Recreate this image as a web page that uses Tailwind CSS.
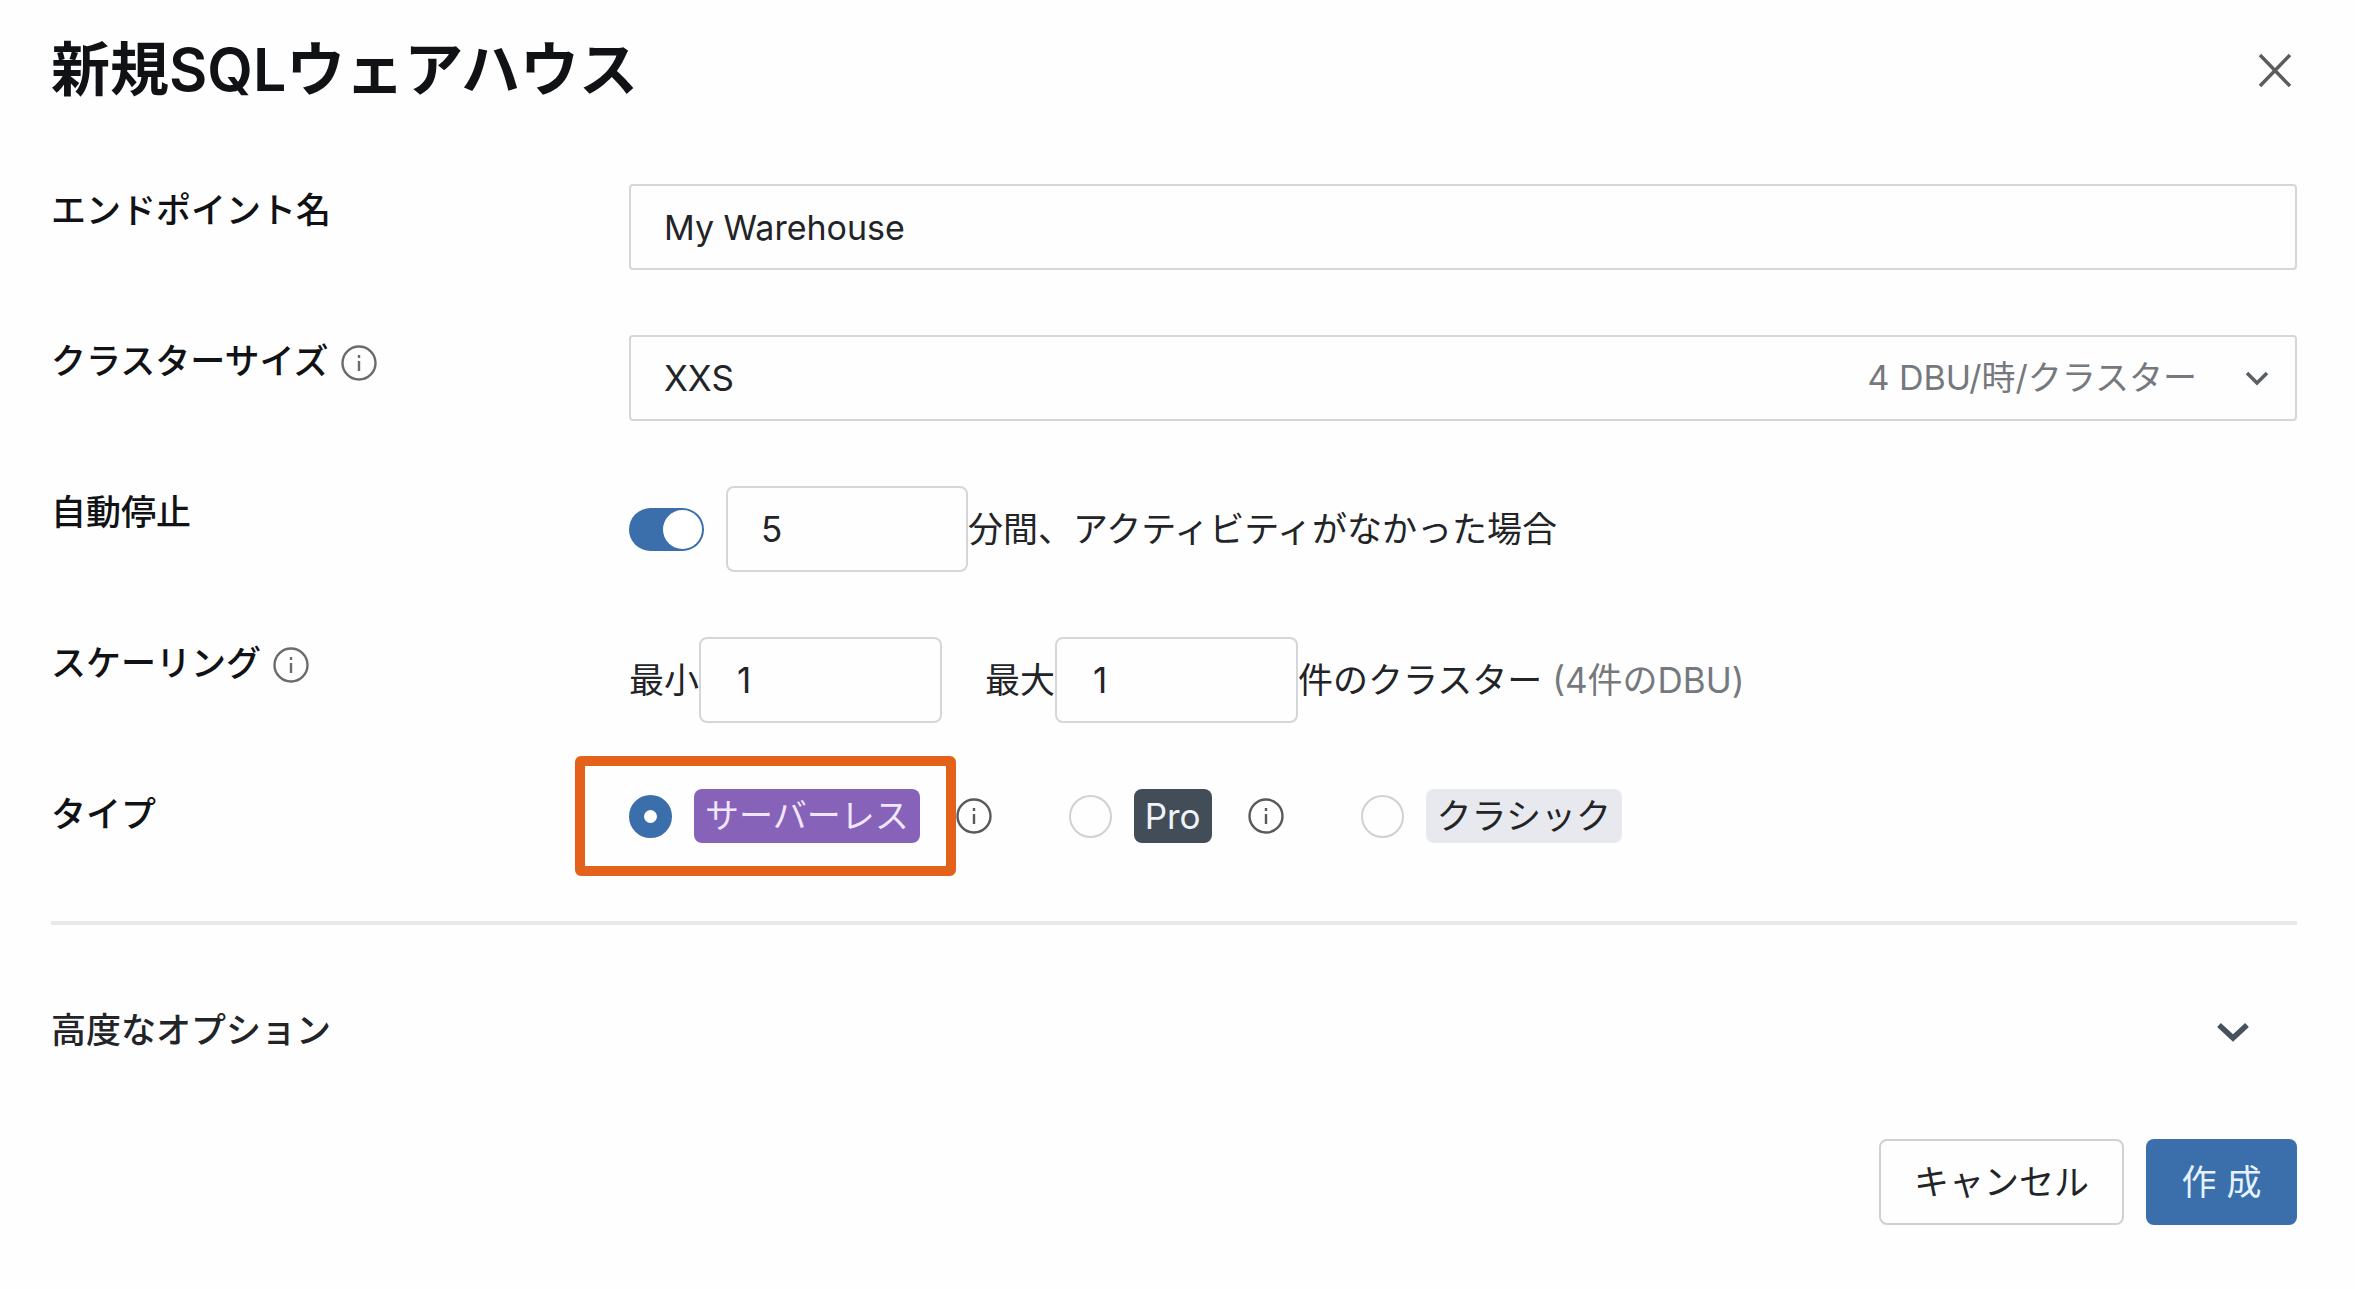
<!DOCTYPE html>
<html lang="ja">
<head>
<meta charset="utf-8">
<title>新規SQLウェアハウス</title>
<script src="https://cdn.jsdelivr.net/npm/@tailwindcss/browser@4"></script>
</head>
<body class="bg-[#fefefe] font-[Inter,'Noto_Sans_CJK_JP',sans-serif] text-[35px] leading-[52px] text-[#222427]">
<svg class="hidden" aria-hidden="true">
  <symbol id="info" viewBox="0 0 36 36">
    <circle cx="18" cy="18" r="16.5" fill="none" stroke="currentColor" stroke-width="2.4"/>
    <path d="M18 10v3M18 16v10" stroke="currentColor" stroke-width="2.4"/>
  </symbol>
</svg>
<main role="dialog" aria-labelledby="title" class="pt-7 pr-[58px] pl-[51px]">
  <header class="flex h-[84px] items-center justify-between">
    <h1 id="title" class="text-[59px] leading-[84px] font-semibold text-[#111216]">新規SQLウェアハウス</h1>
    <button type="button" aria-label="閉じる" class="px-1 text-[#5c5c5c]">
      <svg class="size-9" viewBox="0 0 36 36" fill="none" stroke="currentColor" stroke-width="3.4"><path d="M3 3l30 31M33 3L3 34"/></svg>
    </button>
  </header>

  <form class="pt-[72px]">
    <div class="grid grid-cols-[578px_1fr] gap-y-[65px]">
      <label for="name" class="font-medium text-[#111216]">エンドポイント名</label>
      <input id="name" type="text" value="My Warehouse" class="h-[86px] w-full rounded-sm border-2 border-[#d5d6d8] bg-transparent px-[33px] text-[34px]">

      <div class="flex items-start gap-3 font-medium text-[#111216]">
        <label for="size">クラスターサイズ</label>
        <svg class="mt-2.5 size-9 text-[#6a6b6d]"><use href="#info"/></svg>
      </div>
      <div class="relative">
        <select id="size" class="h-[86px] w-full appearance-none rounded-sm border-2 border-[#d5d6d8] bg-transparent px-[33px]">
          <option>XXS</option>
        </select>
        <div class="pointer-events-none absolute inset-y-0 right-7 flex items-center gap-12 text-[34px] text-[#75797e]">
          <span>4 DBU/時/クラスター</span>
          <svg class="w-6 text-[#5a5f64]" viewBox="0 0 24 16" fill="none" stroke="currentColor" stroke-width="3.6"><path d="M2 3l10 10L22 3"/></svg>
        </div>
      </div>

      <label for="minutes" class="font-medium text-[#111216]">自動停止</label>
      <div class="flex items-center">
        <input type="checkbox" role="switch" checked aria-label="自動停止" class="mr-[22px] h-[43px] w-[75px] appearance-none rounded-full bg-[#3a6fac] p-[2px] after:ml-auto after:block after:size-[39px] after:rounded-full after:bg-white">
        <input id="minutes" type="text" value="5" class="h-[86px] w-[242px] rounded-lg border-2 border-[#d5d6d8] bg-transparent px-[33px]">
        <span>分間、アクティビティがなかった場合</span>
      </div>

      <div class="flex items-start gap-3 font-medium text-[#111216]">
        <span>スケーリング</span>
        <svg class="mt-2.5 size-9 text-[#6a6b6d]"><use href="#info"/></svg>
      </div>
      <div class="flex items-center">
        <label for="min">最小</label>
        <input id="min" type="text" value="1" class="mr-[43px] h-[86px] w-[243px] rounded-lg border-2 border-[#d5d6d8] bg-transparent px-9">
        <label for="max">最大</label>
        <input id="max" type="text" value="1" class="h-[86px] w-[243px] rounded-lg border-2 border-[#d5d6d8] bg-transparent px-9">
        <span>件のクラスター <span class="text-[#75797e]">(4件のDBU)</span></span>
      </div>

      <span class="font-medium text-[#111216]">タイプ</span>
      <div class="flex h-14 items-center">
        <div class="relative mr-9 flex items-center gap-[22px]">
          <input id="serverless" type="radio" name="type" checked class="size-[43px] appearance-none rounded-full border-[15px] border-[#3a6fac] bg-white">
          <label for="serverless" class="rounded-lg bg-[#8662b8] px-[11px] text-[34px] leading-[54px] text-[#f0e6ff]">サーバーレス</label>
          <div class="pointer-events-none absolute -top-[33px] right-[-36px] -bottom-[33px] left-[-54px] rounded-md border-10 border-[#e4611a]"></div>
        </div>
        <svg class="mr-[77px] size-9 text-[#58595b]"><use href="#info"/></svg>
        <div class="mr-9 flex items-center gap-[22px]">
          <input id="pro" type="radio" name="type" class="size-[43px] appearance-none rounded-full border-2 border-[#d0d1d3]">
          <label for="pro" class="rounded-lg bg-[#434d58] px-[11px] leading-[54px] text-[#eef4fa]">Pro</label>
        </div>
        <svg class="mr-[77px] size-9 text-[#58595b]"><use href="#info"/></svg>
        <div class="flex items-center gap-[22px]">
          <input id="classic" type="radio" name="type" class="size-[43px] appearance-none rounded-full border-2 border-[#d0d1d3]">
          <label for="classic" class="rounded-lg bg-[#e8e9ee] px-[11px] leading-[54px]">クラシック</label>
        </div>
      </div>
    </div>

    <hr class="mt-[77px] border-t-4 border-[#e8e8e8]">

    <button type="button" aria-expanded="false" class="mt-[79px] flex w-full items-center justify-between pr-[46px] font-medium text-[#222427]">
      <span>高度なオプション</span>
      <svg class="w-9 text-[#46525e]" viewBox="0 0 36 24" fill="none" stroke="currentColor" stroke-width="5.5"><path d="M4 7l14 13L32 7"/></svg>
    </button>

    <footer class="mt-[83px] flex justify-end gap-[22px]">
      <button type="button" class="h-[86px] w-[245px] rounded-lg border-2 border-[#cfd0d2]">キャンセル</button>
      <button type="submit" class="h-[86px] w-[151px] rounded-lg bg-[#3a6fac] text-[#e6f2ff]">作 成</button>
    </footer>
  </form>
</main>
</body>
</html>
